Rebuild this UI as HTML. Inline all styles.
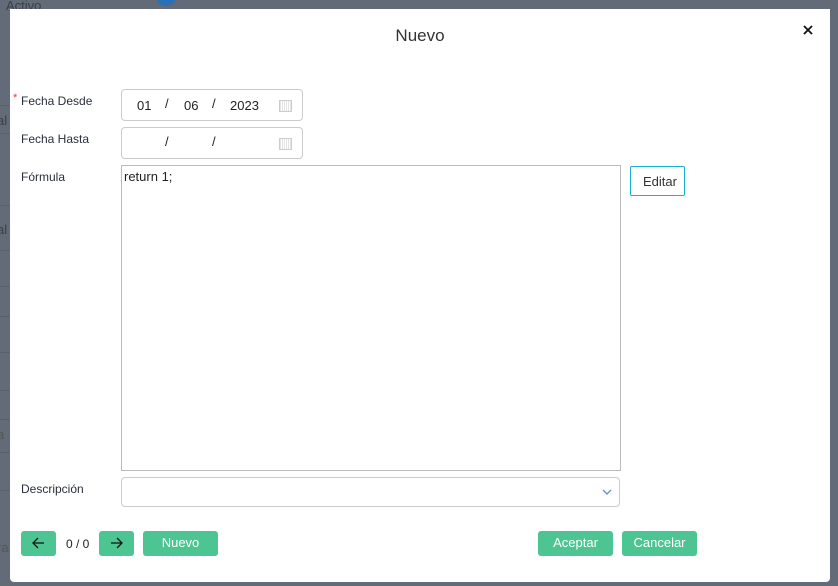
<!DOCTYPE html>
<html><head><style>
body{margin:0;width:838px;height:586px;background:#646b78;font-family:"Liberation Sans",sans-serif;position:relative;overflow:hidden;color:#212529}
.bg{position:absolute;color:#3a3f48;font-size:13px}
.line{position:absolute;left:0;width:10px;height:1px;background:#58606b}
.modal{position:absolute;left:10px;top:9px;width:820px;height:573px;background:#fff;border-radius:0 0 4px 4px}
.title{position:absolute;left:0;right:0;top:17px;text-align:center;font-size:17px;color:#333}
.lbl{position:absolute;left:11px;font-size:12px;color:#2a2f3a}
.inp{position:absolute;left:111px;border:1px solid #ccc;border-radius:4px;background:#fff}
.t{position:absolute;font-size:13px;color:#222}
.btn{position:absolute;background:#4cc592;color:#fff;border-radius:3px;font-size:13px;text-align:center;height:25px;line-height:24px;top:522px}
.btn svg{position:absolute;left:11px;top:6px}
.cal{position:absolute;width:11px;height:10px;border:1px solid #ccc;background:repeating-linear-gradient(90deg,#e4e4e4 0 1px,#fff 1px 2px)}
</style></head><body>
<div class="bg" style="left:6px;top:-2px">Activo</div>
<div style="position:absolute;left:157px;top:-6px;width:18px;height:12px;border-radius:50%;background:#2d6fb5"></div>
<div class="bg" style="left:-3px;top:113px">al</div>
<div class="bg" style="left:-3px;top:222px">al</div>
<div class="bg" style="left:-3px;top:427px;color:#555">a</div>
<div class="bg" style="left:-3px;top:540px;color:#555">ra</div>
<div class="line" style="top:105px"></div><div class="line" style="top:133px"></div>
<div class="line" style="top:205px"></div><div class="line" style="top:250px"></div>
<div class="line" style="top:286px"></div><div class="line" style="top:316px"></div>
<div class="line" style="top:352px"></div><div class="line" style="top:390px"></div>
<div class="line" style="top:419px"></div><div class="line" style="top:452px"></div>
<div class="line" style="top:490px"></div>
<div class="modal">
<div class="title">Nuevo</div>
<svg style="position:absolute;left:793px;top:16px" width="10" height="10"><path d="M1 1L9 9M9 1L1 9" stroke="#111" stroke-width="1.8"/></svg>
<div class="lbl" style="left:3px;top:83px;color:#e33;font-size:11px">*</div>
<div class="lbl" style="top:85px">Fecha Desde</div>
<div class="inp" style="top:80px;width:180px;height:30px">
 <span class="t" style="left:15px;top:8px">01</span><span class="t" style="left:43px;top:6px">/</span>
 <span class="t" style="left:62px;top:8px">06</span><span class="t" style="left:90px;top:6px">/</span>
 <span class="t" style="left:108px;top:8px">2023</span><div class="cal" style="left:157px;top:10px"></div></div>
<div class="lbl" style="top:123px">Fecha Hasta</div>
<div class="inp" style="top:118px;width:180px;height:30px">
 <span class="t" style="left:43px;top:6px">/</span><span class="t" style="left:90px;top:6px">/</span>
 <div class="cal" style="left:157px;top:10px"></div></div>
<div class="lbl" style="top:161px">Fórmula</div>
<div class="inp" style="top:156px;width:498px;height:304px;border-radius:0;border-color:#bbb"><span class="t" style="left:2px;top:3px">return 1;</span></div>
<div style="position:absolute;left:620px;top:157px;width:53px;height:28px;border:1px solid #1ab0d0;border-radius:2px;font-size:13px;line-height:30px;color:#333"><span style="position:absolute;left:12px">Editar</span></div>
<div class="lbl" style="top:473px">Descripción</div>
<div class="inp" style="top:468px;width:497px;height:28px"><svg style="position:absolute;left:480px;top:11px" width="12" height="7"><path d="M1 1L5 5L9 1" stroke="#5b8fe0" stroke-width="1.3" fill="none"/></svg></div>
<div class="btn" style="left:11px;width:35px"><svg width="13" height="12"><path d="M12 6H1M6 1L1 6L6 11" stroke="#111" stroke-width="1.3" fill="none"/></svg></div>
<div class="t" style="left:56px;top:528px;font-size:12px">0 / 0</div>
<div class="btn" style="left:89px;width:35px"><svg width="13" height="12"><path d="M1 6H12M7 1L12 6L7 11" stroke="#111" stroke-width="1.3" fill="none"/></svg></div>
<div class="btn" style="left:133px;width:75px">Nuevo</div>
<div class="btn" style="left:528px;width:75px">Aceptar</div>
<div class="btn" style="left:612px;width:75px">Cancelar</div>
</div>
</body></html>
